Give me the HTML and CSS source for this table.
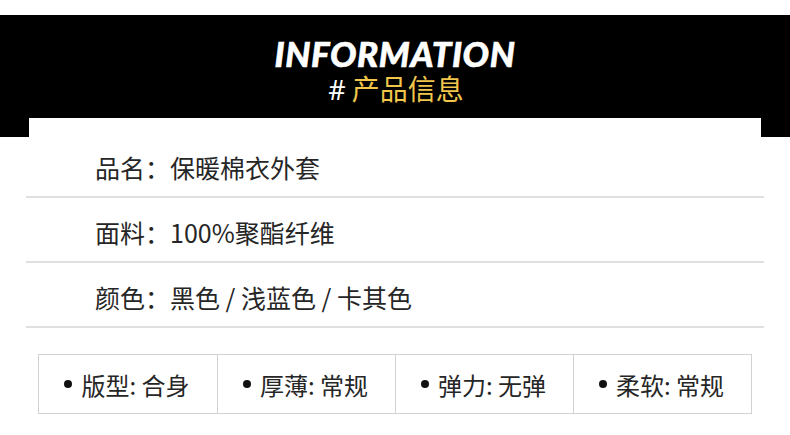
FILE: index.html
```html
<!DOCTYPE html>
<html lang="zh-CN">
<head>
<meta charset="utf-8">
<title>INFORMATION</title>
<link rel="stylesheet" href="styles.css">
</head>
<body>
<header class="banner">
  <h1 class="title">INFORMATION</h1>
  <p class="subtitle"><span class="hash">#</span><span class="sub-cn">产品信息</span></p>
</header>
<main class="card">
  <ul class="rows">
    <li class="row">品名：保暖棉衣外套</li>
    <li class="row">面料：100%聚酯纤维</li>
    <li class="row">颜色：黑色 / 浅蓝色 / 卡其色</li>
  </ul>
  <div class="specs">
    <div class="spec"><span class="dot"></span>版型: 合身</div>
    <div class="spec"><span class="dot"></span>厚薄: 常规</div>
    <div class="spec"><span class="dot"></span>弹力: 无弹</div>
    <div class="spec"><span class="dot"></span>柔软: 常规</div>
  </div>
</main>
</body>
</html>
```
FILE: styles.css
```css
* { box-sizing: border-box; }
html, body { margin: 0; padding: 0; background: #fff; }
body {
  width: 790px;
  height: 435px;
  overflow: hidden;
  font-family: "Noto Sans CJK SC", "Noto Sans", sans-serif;
  color: #262626;
}
.banner {
  margin-top: 15px;
  height: 122px;
  background: #000;
  text-align: center;
  padding-top: 21px;
}
.title {
  margin: 0;
  font-family: Lato, "Open Sans", sans-serif;
  font-weight: 900;
  font-style: italic;
  font-size: 35px;
  line-height: 34px;
  color: #fff;
  letter-spacing: 0.6px;
  -webkit-text-stroke: 0.6px #fff;
}
.subtitle {
  margin: 0;
  font-size: 28px;
  line-height: 36px;
  font-weight: 400;
  padding-left: 2px;
}
.hash {
  color: #fff;
  font-family: "Noto Sans", sans-serif;
  font-size: 27px;
  margin-right: 6px;
}
.sub-cn { color: #f1c64b; }
.card {
  margin: -19px 29px 0;
  background: #fff;
  height: 298px;
  padding-top: 15px;
}
.rows {
  list-style: none;
  margin: 0 -3px 0 -3px;
  padding: 0;
}
.row {
  height: 65px;
  padding: 20px 0 0 69px;
  font-size: 25px;
  line-height: 28px;
  border-bottom: 2px solid #e0e0e0;
}
.specs {
  margin: 26px 9px 0 9px;
  height: 60px;
  display: grid;
  grid-template-columns: repeat(4, 1fr);
  border: 1px solid #d2d2d2;
}
.spec {
  display: flex;
  align-items: center;
  justify-content: center;
  font-size: 24px;
  border-left: 1px solid #d2d2d2;
  padding-right: 2px;
}
.spec:first-child { border-left: none; }
.dot {
  width: 8px;
  height: 8px;
  border-radius: 50%;
  background: #111;
  margin-right: 9px;
}
```
